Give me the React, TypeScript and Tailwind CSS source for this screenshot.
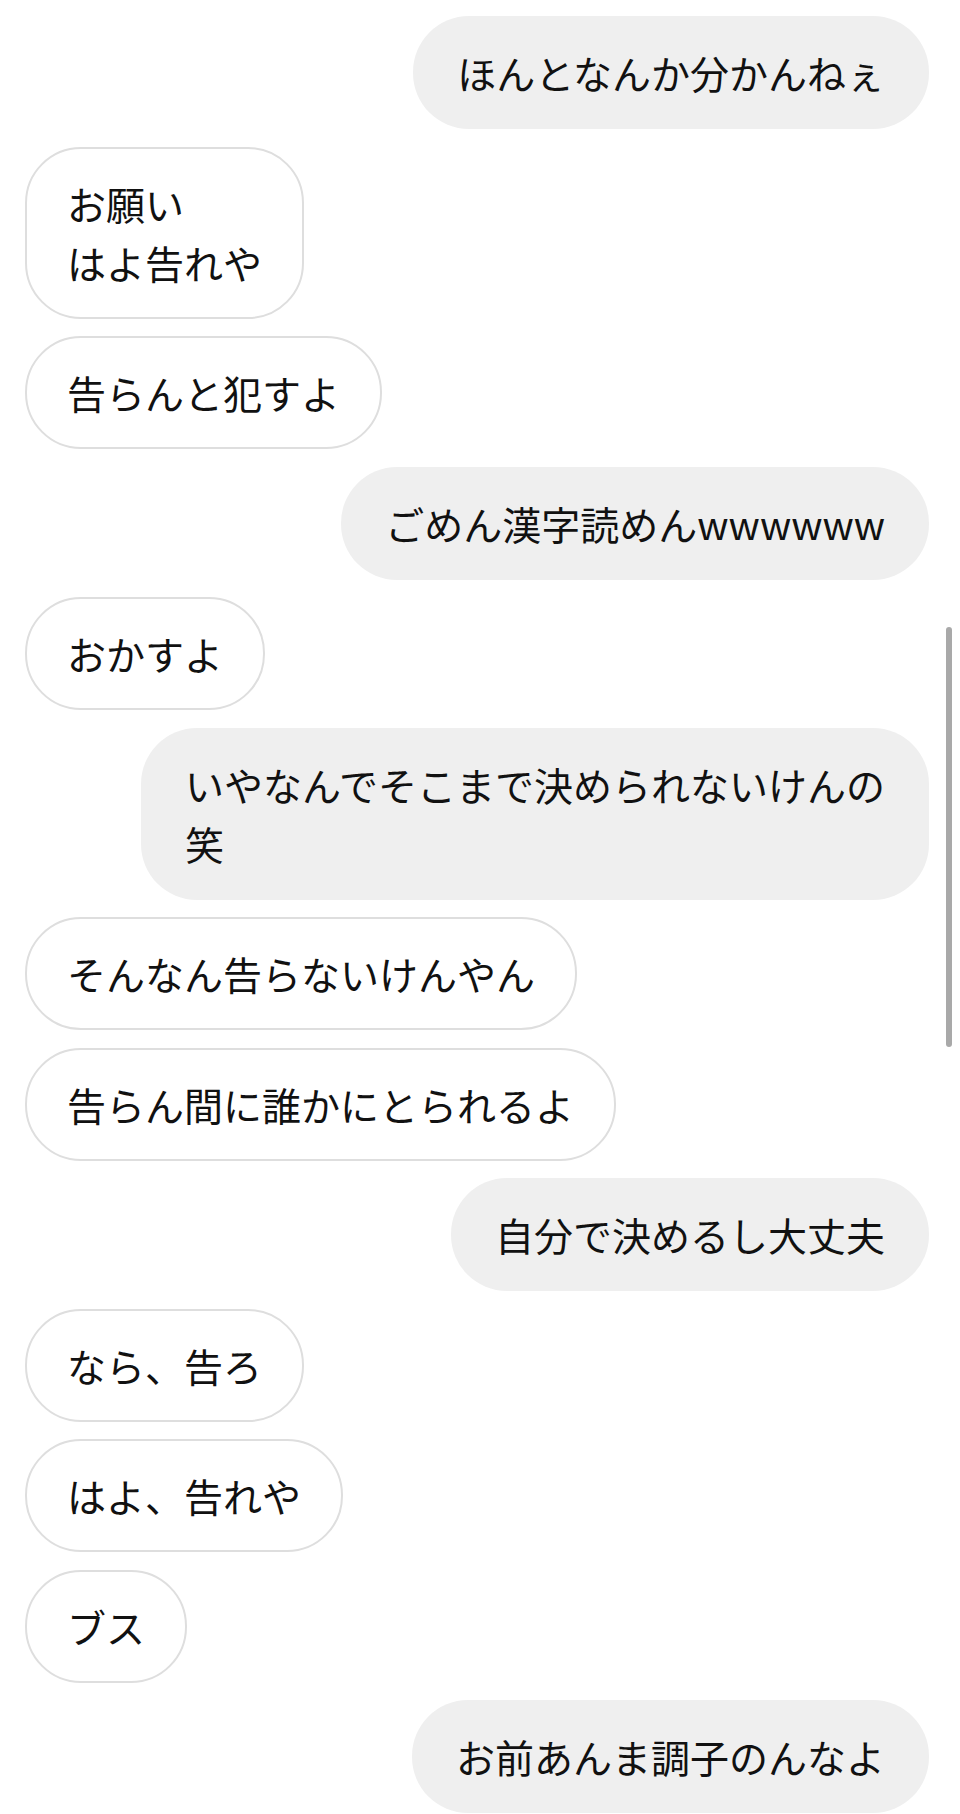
import React from "react";

type Msg = { mine: boolean; text: string };

const messages: Msg[] = [
  { mine: true, text: "ほんとなんか分かんねぇ" },
  { mine: false, text: "お願い\nはよ告れや" },
  { mine: false, text: "告らんと犯すよ" },
  { mine: true, text: "ごめん漢字読めんwwwwww" },
  { mine: false, text: "おかすよ" },
  { mine: true, text: "いやなんでそこまで決められないけんの\n笑" },
  { mine: false, text: "そんなん告らないけんやん" },
  { mine: false, text: "告らん間に誰かにとられるよ" },
  { mine: true, text: "自分で決めるし大丈夫" },
  { mine: false, text: "なら、告ろ" },
  { mine: false, text: "はよ、告れや" },
  { mine: false, text: "ブス" },
  { mine: true, text: "お前あんま調子のんなよ" },
];

// 吹き出し
const Bubble = ({ mine, text }: Msg) => {
  return (
    <div className={mine ? "flex justify-end" : "flex justify-start"}>
      <div
        className={
          mine
            ? "whitespace-pre-line rounded-[56px] bg-[#efefef] px-[44px] py-[27px] text-[39px] leading-[59px] text-[#111]"
            : "whitespace-pre-line rounded-[56px] border-2 border-[#dedede] bg-white px-[40px] py-[25px] text-[39px] leading-[59px] text-[#111]"
        }
      >
        {text}
      </div>
    </div>
  );
};

export default function App() {
  return (
    <div
      className="relative h-[1814px] w-[960px] overflow-hidden bg-white"
      style={{ fontFamily: '"Noto Sans CJK JP", "Noto Sans", sans-serif' }}
    >
      <div className="flex flex-col gap-[17.5px] pl-[25px] pr-[31px] pt-[16px]">
        {messages.map((m, i) => (
          <Bubble key={i} mine={m.mine} text={m.text} />
        ))}
      </div>

      {/* スクロールバー */}
      <div className="absolute left-[946px] top-[627px] h-[420px] w-[6px] rounded-full bg-[#a9a9a9]" />
    </div>
  );
}
